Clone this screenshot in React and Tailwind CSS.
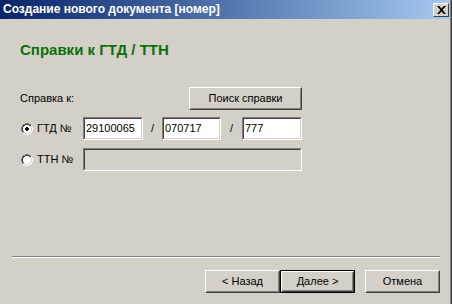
import React from "react";

const font = { fontFamily: '"Liberation Sans", Arial, sans-serif' };

function Button({ children, isDefault, className = "" }) {
  // classic raised 3D button
  if (isDefault) {
    return (
      <div className={"border border-black " + className}>
        <div className="h-full border border-t-white border-l-white border-b-[#404040] border-r-[#404040]">
          <div className="h-full flex items-center justify-center border border-t-[#d4d0c8] border-l-[#d4d0c8] border-b-[#808080] border-r-[#808080] text-[11px] text-black">
            {children}
          </div>
        </div>
      </div>
    );
  }
  return (
    <div className={"border border-t-white border-l-white border-b-[#404040] border-r-[#404040] " + className}>
      <div className="h-full flex items-center justify-center border border-t-[#d4d0c8] border-l-[#d4d0c8] border-b-[#808080] border-r-[#808080] text-[11px] text-black">
        {children}
      </div>
    </div>
  );
}

function Edit({ value, disabled, className = "" }) {
  return (
    <div className={"border border-t-[#808080] border-l-[#808080] border-b-white border-r-white " + className}>
      <div
        className={
          "h-full flex items-center pl-[1px] border border-t-[#404040] border-l-[#404040] border-b-[#d4d0c8] border-r-[#d4d0c8] text-[11px] text-black " +
          (disabled ? "bg-[#d4d0c8]" : "bg-white")
        }
      >
        {value}
      </div>
    </div>
  );
}

function Radio({ checked }) {
  return (
    <svg width="12" height="12" viewBox="0 0 12 12" className="shrink-0">
      <path d="M4 0h4v1h2v1h1v2h1v4h-1v2h-1v1h-2v1h-4v-1h-2v-1h-1v-2h-1v-4h1v-2h1v-1h2z" fill="#fff" />
      <path d="M4 0h4v1h-4zM2 1h2v1h-2zM8 1h2v1h-2zM1 2h1v2h-1zM0 4h1v4h-1zM1 8h1v2h-1z" fill="#808080" />
      <path d="M4 1h4v1h-4zM2 2h2v1h-2zM8 2h2v1h-2zM2 3h1v1h-1zM1 4h1v4h-1zM2 8h1v1h-1z" fill="#404040" />
      <path d="M10 2h1v2h-1zM11 4h1v4h-1zM10 8h1v2h-1zM8 10h2v1h-2zM2 10h2v1h-2zM4 11h4v1h-4z" fill="#fff" />
      <path d="M9 3h1v1h-1zM10 4h1v4h-1zM9 8h1v1h-1zM8 9h1v1h-1zM3 9h1v1h-1zM4 10h4v1h-4zM2 9h1v1h-1z" fill="#d4d0c8" />
      {checked && <path d="M5 4h2v1h1v2h-1v1h-2v-1h-1v-2h1z" fill="#000" />}
    </svg>
  );
}

export default function App() {
  return (
    <div className="w-[452px] h-[304px] flex bg-[#d4d0c8] overflow-hidden" style={font}>
      <div className="w-[450px] flex flex-col">
        {/* title bar */}
        <div className="h-[19px] flex items-center justify-between bg-gradient-to-r from-[#0a246a] to-[#a6caf0] pl-[3px] pr-[1px]">
          <span className="text-white font-bold text-[12px] leading-[19px]">
            Создание нового документа [номер]
          </span>
          <div className="w-[16px] h-[14px] border border-t-white border-l-white border-b-[#404040] border-r-[#404040] bg-[#d4d0c8] flex items-center justify-center">
            <svg width="9" height="8" viewBox="0 0 9 8">
              <path d="M0 0h2.2l2.3 2.6 2.3-2.6h2.2l-3.4 4 3.4 4h-2.2l-2.3-2.6-2.3 2.6h-2.2l3.4-4z" fill="#000" />
            </svg>
          </div>
        </div>

        <div className="mt-[22px] pl-[20px] text-[15px] leading-[18px] font-bold text-[#0a700a]">
          Справки к ГТД / ТТН
        </div>

        <div className="mt-[28px] w-[302px] flex items-center justify-between pl-[20px]">
          <span className="text-[11px] text-black">Справка к:</span>
          <Button className="w-[113px] h-[23px]">Поиск справки</Button>
        </div>

        <div className="mt-[7px] flex items-center h-[23px]">
          <div className="pl-[21px]">
            <Radio checked />
          </div>
          <span className="w-[50px] pl-[4px] text-[11px] text-black">ГТД №</span>
          <Edit value="29100065" className="w-[60px] h-[23px]" />
          <span className="w-[19px] text-center text-[11px] text-black">/</span>
          <Edit value="070717" className="w-[59px] h-[23px]" />
          <span className="w-[21px] text-center text-[11px] text-black">/</span>
          <Edit value="777" className="w-[60px] h-[23px]" />
        </div>

        <div className="mt-[8px] flex items-center h-[23px]">
          <div className="pl-[21px]">
            <Radio />
          </div>
          <span className="w-[50px] pl-[4px] text-[11px] text-black">ТТН №</span>
          <Edit disabled className="w-[219px] h-[23px]" />
        </div>

        <div className="mt-[85px] ml-[12px] w-[428px] border-t border-t-[#808080] border-b border-b-white" />

        <div className="mt-[12px] flex pl-[205px]">
          <Button className="w-[75px] h-[23px]">&lt; Назад</Button>
          <Button isDefault className="w-[75px] h-[23px]">Далее &gt;</Button>
          <Button className="ml-[10px] w-[75px] h-[23px]">Отмена</Button>
        </div>
      </div>
      <div className="w-[1px] bg-[#808080]" />
      <div className="w-[1px] bg-[#404040]" />
    </div>
  );
}
